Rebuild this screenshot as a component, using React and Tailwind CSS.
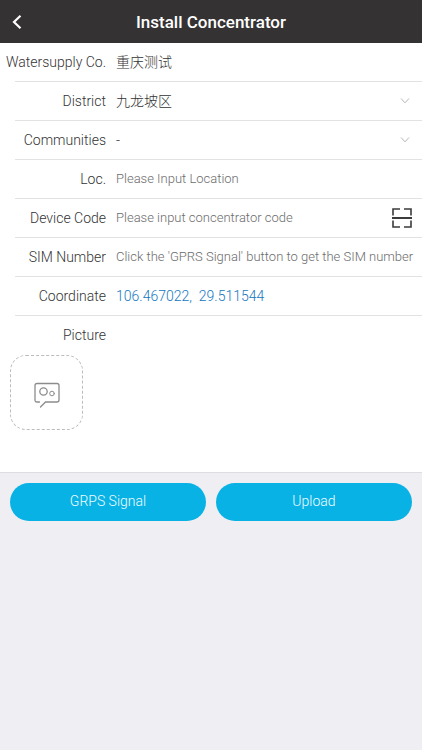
import React, { useState } from 'react';

const inputClass =
  'w-full min-w-0 bg-transparent text-[13px] leading-5 text-[#555555] outline-none placeholder:text-[#6c6c6c] placeholder:opacity-100';

function Row({ id, label, last, children }) {
  const border = last ? 'border-transparent' : 'border-[#e2e2e2]';

  return (
    <div className="flex h-[39px]">
      <label
        htmlFor={id}
        className={`ml-[15px] flex w-[91px] shrink-0 items-center justify-end border-b text-[14px] leading-5 whitespace-nowrap text-[#333333] ${border}`}
      >
        {label}
      </label>
      <div className={`flex min-w-0 flex-1 items-center border-b pr-2 pl-[10px] ${border}`}>{children}</div>
    </div>
  );
}

function SelectField({ id, value, onChange, options }) {
  return (
    <div className="grid w-full items-center">
      <select
        id={id}
        value={value}
        onChange={onChange}
        className="col-start-1 row-start-1 w-full appearance-none bg-transparent text-[14px] leading-5 text-[#333333] outline-none"
      >
        {options.map((option) => (
          <option key={option} value={option}>
            {option}
          </option>
        ))}
      </select>
      <svg
        viewBox="0 0 10 6"
        className="pointer-events-none col-start-1 row-start-1 mr-1 h-[6px] w-[10px] justify-self-end"
        fill="none"
        stroke="#b5b5b5"
      >
        <path d="M1 0.5L5 4.8L9 0.5" />
      </svg>
    </div>
  );
}

function ScanIcon() {
  return (
    <svg viewBox="0 0 20 20" className="h-5 w-5" fill="none" stroke="#3d3a3b" strokeWidth="1.6">
      <path d="M1 7.5V1H8M12 1H19V7.5M1 12.5V19H8M12 19H19V12.5" />
      <path d="M0 10H20" strokeWidth="2" />
    </svg>
  );
}

function CameraIcon() {
  return (
    <svg
      viewBox="0 0 26 26"
      className="h-[26px] w-[26px]"
      fill="none"
      stroke="#8c8c8c"
      strokeWidth="1.3"
      strokeLinecap="round"
    >
      <path d="M5.5 20H3Q1 20 1 18V3.5Q1 1.5 3 1.5H23Q25 1.5 25 3.5V18Q25 20 23 20H11.5L6.5 25" />
      <circle cx="9.5" cy="9.5" r="3.7" />
      <circle cx="18" cy="11.5" r="2.3" strokeWidth="1" />
    </svg>
  );
}

export default function App() {
  const [district, setDistrict] = useState('九龙坡区');
  const [community, setCommunity] = useState('-');
  const [location, setLocation] = useState('');
  const [deviceCode, setDeviceCode] = useState('');
  const [simNumber, setSimNumber] = useState('');

  return (
    <div className="min-h-screen bg-[#eeeef3] font-['Roboto','Noto_Sans_CJK_SC',sans-serif] font-light">
      <header className="grid h-[43px] grid-cols-[44px_1fr_44px] items-center bg-[#353233] text-white">
        <button type="button" aria-label="Back" className="flex h-full items-center pl-3">
          <svg viewBox="0 0 10 14" className="h-[14px] w-[10px]" fill="none" stroke="currentColor" strokeWidth="2.2">
            <path d="M8.5 0.8L2 7L8.5 13.2" />
          </svg>
        </button>
        <h1 className="text-center text-[17px] leading-6 font-medium">Install Concentrator</h1>
      </header>

      <main>
        <section className="border-b border-[#dedee2] bg-white pb-[42px]">
          <Row id="company" label="Watersupply Co.">
            <input
              id="company"
              readOnly
              value="重庆测试"
              className="w-full min-w-0 bg-transparent text-[14px] leading-5 text-[#333333] outline-none"
            />
          </Row>
          <Row id="district" label="District">
            <SelectField
              id="district"
              value={district}
              onChange={(e) => setDistrict(e.target.value)}
              options={['九龙坡区']}
            />
          </Row>
          <Row id="communities" label="Communities">
            <SelectField
              id="communities"
              value={community}
              onChange={(e) => setCommunity(e.target.value)}
              options={['-']}
            />
          </Row>
          <Row id="location" label="Loc.">
            <input
              id="location"
              value={location}
              onChange={(e) => setLocation(e.target.value)}
              placeholder="Please Input Location"
              className={inputClass}
            />
          </Row>
          <Row id="device-code" label="Device Code">
            <input
              id="device-code"
              value={deviceCode}
              onChange={(e) => setDeviceCode(e.target.value)}
              placeholder="Please input concentrator code"
              className={inputClass}
            />
            <button type="button" aria-label="Scan code" className="mr-[2px] shrink-0">
              <ScanIcon />
            </button>
          </Row>
          <Row id="sim-number" label="SIM Number">
            <input
              id="sim-number"
              value={simNumber}
              onChange={(e) => setSimNumber(e.target.value)}
              placeholder="Click the 'GPRS Signal' button to get the SIM number"
              className={inputClass}
            />
          </Row>
          <Row id="coordinate" label="Coordinate">
            <output id="coordinate" className="text-[14px] leading-5 whitespace-pre text-[#1478bf]">
              106.467022,  29.511544
            </output>
          </Row>
          <Row id="picture" label="Picture" last />
          <button
            id="picture"
            type="button"
            aria-label="Add picture"
            className="ml-[10px] flex h-[75px] w-[73px] items-center justify-center rounded-2xl border border-dashed border-[#bcbcbc] pt-1"
          >
            <CameraIcon />
          </button>
        </section>

        <div className="grid grid-cols-2 gap-[10px] px-[10px] pt-[10px]">
          <button
            type="button"
            className="h-[38px] rounded-full bg-[#09b2e4] pb-[2px] text-[14px] leading-5 text-[#f0fbff]"
          >
            GRPS Signal
          </button>
          <button
            type="button"
            className="h-[38px] rounded-full bg-[#09b2e4] pb-[2px] text-[14px] leading-5 text-[#f0fbff]"
          >
            Upload
          </button>
        </div>
      </main>
    </div>
  );
}
